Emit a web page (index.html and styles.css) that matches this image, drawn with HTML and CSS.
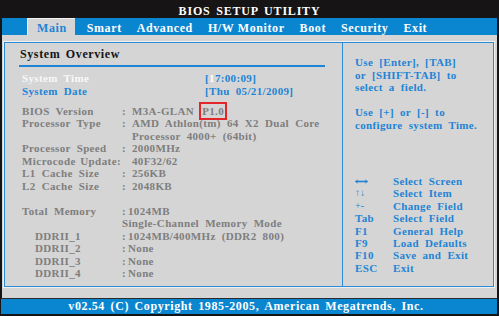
FILE: index.html
```html
<!DOCTYPE html>
<html>
<head>
<meta charset="utf-8">
<link rel="stylesheet" href="styles.css">
</head>
<body>
<div class="screen">
  <div class="title">BIOS SETUP UTILITY</div>
  <div class="menubar">
    <span class="tab active">Main</span>
    <span class="tab first">Smart</span>
    <span class="tab">Advanced</span>
    <span class="tab">H/W Monitor</span>
    <span class="tab">Boot</span>
    <span class="tab">Security</span>
    <span class="tab">Exit</span>
  </div>
  <div class="main">
    <div class="panels">
      <div class="left">
        <div class="heading">System Overview</div>
        <div class="rule"></div>
        <div class="block time">
          <div class="lbl white">System Time</div><div class="val blue">[<span class="cur">1</span>7:00:09]</div>
          <div class="lbl blue">System Date</div><div class="val blue">[Thu 05/21/2009]</div>
        </div>
        <div class="block info">
          <div class="lbl">BIOS Version</div><div class="col">:</div><div class="val">M3A-GLAN <span class="mark">P1.0</span></div>
          <div class="lbl">Processor Type</div><div class="col">:</div><div class="val">AMD Athlon(tm) 64 X2 Dual Core</div>
          <div class="lbl"></div><div class="col"></div><div class="val">Processor 4000+ (64bit)</div>
          <div class="lbl">Processor Speed</div><div class="col">:</div><div class="val">2000MHz</div>
          <div class="lbl span2">Microcode Update:</div><div class="val">40F32/62</div>
          <div class="lbl">L1 Cache Size</div><div class="col">:</div><div class="val">256KB</div>
          <div class="lbl">L2 Cache Size</div><div class="col">:</div><div class="val">2048KB</div>
        </div>
        <div class="block mem">
          <div class="lbl">Total Memory</div><div class="col">:</div><div class="val">1024MB</div>
          <div class="lbl"></div><div class="col"></div><div class="val sub">Single-Channel Memory Mode</div>
          <div class="lbl ind">DDRII_1</div><div class="col">:</div><div class="val">1024MB/400MHz (DDR2 800)</div>
          <div class="lbl ind">DDRII_2</div><div class="col">:</div><div class="val">None</div>
          <div class="lbl ind">DDRII_3</div><div class="col">:</div><div class="val">None</div>
          <div class="lbl ind">DDRII_4</div><div class="col">:</div><div class="val">None</div>
        </div>
      </div>
      <div class="right">
        <div class="help">
          <div>Use [Enter], [TAB]</div>
          <div>or [SHIFT-TAB] to</div>
          <div>select a field.</div>
          <div class="blank"></div>
          <div>Use [+] or [-] to</div>
          <div>configure system Time.</div>
        </div>
        <div class="keys">
          <div class="key"><svg class="lr" width="13" height="5" viewBox="0 0 13 5"><path d="M0.5 2.5 H12.5" stroke="#1e84d6" stroke-width="1.6"/><path d="M0.5 2.5 L3 0.8 M0.5 2.5 L3 4.2 M12.5 2.5 L10 0.8 M12.5 2.5 L10 4.2" stroke="#1e84d6" stroke-width="0.8" fill="none"/></svg></div><div class="desc">Select Screen</div>
          <div class="key thin">↑↓</div><div class="desc">Select Item</div>
          <div class="key thin">+-</div><div class="desc">Change Field</div>
          <div class="key">Tab</div><div class="desc">Select Field</div>
          <div class="key">F1</div><div class="desc">General Help</div>
          <div class="key">F9</div><div class="desc">Load Defaults</div>
          <div class="key">F10</div><div class="desc">Save and Exit</div>
          <div class="key">ESC</div><div class="desc">Exit</div>
        </div>
      </div>
    </div>
  </div>
  <div class="footer">v02.54 (C) Copyright 1985-2005, American Megatrends, Inc.</div>
</div>
</body>
</html>
```
FILE: styles.css
```css
html, body {
  margin: 0;
  padding: 0;
  background: #161414;
}
body {
  width: 499px;
  height: 316px;
  overflow: hidden;
  font-family: "Liberation Serif", "Times New Roman", serif;
  font-weight: bold;
}
.screen {
  width: 499px;
  height: 316px;
}
.title {
  height: 18px;
  box-sizing: border-box;
  padding-top: 4px;
  line-height: 14px;
  font-size: 12px;
  color: #ffffff;
  text-align: center;
  letter-spacing: 0.8px;
  word-spacing: 2px;
}
.menubar {
  height: 17px;
  margin: 0 2px;
  background: #0a86d0;
  display: flex;
  align-items: stretch;
  padding-left: 25px;
  font-size: 12px;
  letter-spacing: 0.6px;
}
.tab {
  color: #ffffff;
  padding-top: 3px;
  line-height: 14px;
  margin-left: 15px;
  white-space: nowrap;
}
.tab.active {
  margin-left: 0;
  background: #d5d5d5;
  color: #1e84d6;
  padding: 3px 8px 0 10px;
  box-shadow: inset 1px 1px 0 #f2f2f2;
}
.tab.first {
  margin-left: 12px;
}
.main {
  margin: 0 2px;
  height: 263px;
  box-sizing: border-box;
  background: #d5d5d5;
  padding: 7px 3px 11px 2px;
}
.panels {
  height: 245px;
  box-sizing: border-box;
  border: 1px solid #2a8bd6;
  box-shadow: 0 0 0 1px #f0f0f0;
  display: flex;
}
.left {
  width: 337px;
  flex: none;
  box-sizing: border-box;
  padding: 4px 17px 0 14px;
  font-size: 11px;
  letter-spacing: 0.35px;
  word-spacing: 3px;
  color: #7e7e7e;
}
.heading {
  font-size: 12px;
  line-height: 14px;
  color: #141414;
  padding-left: 1px;
  letter-spacing: 0.6px;
  word-spacing: 2px;
}
.rule {
  height: 2px;
  background: #1e84d6;
  margin-top: 4px;
}
.block {
  display: grid;
  line-height: 12.5px;
  padding-left: 3px;
  white-space: nowrap;
}
.time {
  margin-top: 5px;
  grid-template-columns: 183px auto;
}
.info {
  margin-top: 7.5px;
  grid-template-columns: 100px 10px auto;
}
.span2 {
  grid-column: span 2;
  letter-spacing: 0.45px;
  word-spacing: 1px;
}
.mem {
  margin-top: 12.5px;
  grid-template-columns: 100px 6px auto;
}
.ind {
  padding-left: 13px;
}
.sub {
  margin-left: -6px;
}
.white { color: #f8f8f8; }
.blue { color: #1e84d6; }
.cur { color: #ffffff; }
.mark {
  border: 2px solid #e2262a;
  padding: 1px 1px;
  margin-left: -1px;
}
.right {
  flex: 1;
  border-left: 1px solid #2a8bd6;
  padding: 13px 0 0 12px;
  font-size: 11px;
  letter-spacing: 0.35px;
  word-spacing: 3px;
  color: #1e84d6;
  white-space: nowrap;
}
.help {
  line-height: 12.5px;
}
.blank {
  height: 12.5px;
}
.keys {
  margin-top: 44px;
  display: grid;
  grid-template-columns: 38px auto;
  line-height: 12.4px;
}
.key {
  display: flex;
  align-items: center;
}
.thin {
  font-weight: normal;
  font-size: 10px;
  letter-spacing: 0;
}
.lr {
  display: block;
}
.footer {
  margin: 0 2px 0 1px;
  border-top: 1px solid #2a2a2a;
  height: 15px;
  line-height: 15px;
  background: #0a86d0;
  color: #ffffff;
  font-size: 12px;
  text-align: center;
  letter-spacing: 0.6px;
  word-spacing: 2px;
  padding-right: 6px;
}
```
